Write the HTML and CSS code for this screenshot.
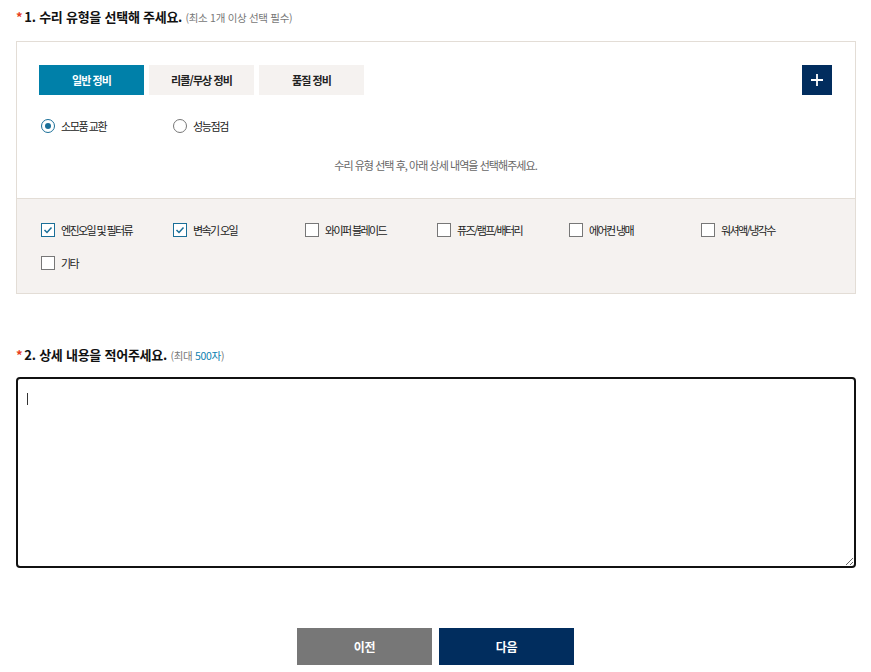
FILE: index.html
```html
<!DOCTYPE html>
<html lang="ko">
<head>
<meta charset="utf-8">
<link rel="stylesheet" href="styles.css">
</head>
<body>
<div class="wrap">
  <h2 class="q-title q1"><span class="star">*</span>1. 수리 유형을 선택해 주세요. <span class="sub">(최소 1개 이상 선택 필수)</span></h2>
  <div class="box">
    <div class="box-top">
      <div class="tab-row">
        <div class="tabs">
          <div class="tab active">일반 정비</div>
          <div class="tab">리콜/무상 정비</div>
          <div class="tab">품질 정비</div>
        </div>
        <div class="plus"><svg width="14" height="14" viewBox="0 0 14 14"><path d="M7 1v12M1 7h12" stroke="#fff" stroke-width="1.8"/></svg></div>
      </div>
      <div class="radio-row">
        <div class="opt"><span class="radio on"></span><span class="lbl">소모품 교환</span></div>
        <div class="opt"><span class="radio"></span><span class="lbl">성능점검</span></div>
      </div>
      <p class="hint">수리 유형 선택 후, 아래 상세 내역을 선택해주세요.</p>
    </div>
    <div class="box-bottom">
      <div class="check-row">
        <div class="opt"><span class="chk on"><svg width="10" height="8" viewBox="0 0 10 8"><path d="M1.5 4l2.5 2.5L8.5 1.5" fill="none" stroke="#1a6f98" stroke-width="1.5"/></svg></span><span class="lbl">엔진오일 및 필터류</span></div>
        <div class="opt"><span class="chk on"><svg width="10" height="8" viewBox="0 0 10 8"><path d="M1.5 4l2.5 2.5L8.5 1.5" fill="none" stroke="#1a6f98" stroke-width="1.5"/></svg></span><span class="lbl">변속기 오일</span></div>
        <div class="opt"><span class="chk"></span><span class="lbl">와이퍼 블레이드</span></div>
        <div class="opt"><span class="chk"></span><span class="lbl">퓨즈/램프/배터리</span></div>
        <div class="opt"><span class="chk"></span><span class="lbl">에어컨 냉매</span></div>
        <div class="opt"><span class="chk"></span><span class="lbl">워셔액/냉각수</span></div>
      </div>
      <div class="check-row">
        <div class="opt"><span class="chk"></span><span class="lbl">기타</span></div>
      </div>
    </div>
  </div>

  <h2 class="q-title q2"><span class="star">*</span>2. 상세 내용을 적어주세요. <span class="sub">(최대 <span class="blue">500자</span>)</span></h2>
  <div class="ta-wrap">
    <textarea class="ta"></textarea>
    <span class="caret"></span>
  </div>

  <div class="btns">
    <button class="btn prev">이전</button>
    <button class="btn next">다음</button>
  </div>
</div>
</body>
</html>
```
FILE: styles.css
```css
* { box-sizing: border-box; }
body {
  margin: 0;
  background: #fff;
  font-family: "Noto Sans CJK KR", "Noto Sans", sans-serif;
  color: #111;
}
.wrap {
  width: 840px;
  margin-left: 16px;
}
.q-title {
  margin: 0;
  font-size: 13px;
  font-weight: 700;
  line-height: 20px;
  letter-spacing: -0.25px;
  color: #111;
}
.q1 { margin-top: 7px; margin-bottom: 13px; }
.q2 { margin-top: 51px; margin-bottom: 11px; }
.star { color: #e8401c; margin-right: 2px; }
.sub {
  font-size: 10.5px;
  font-weight: 400;
  color: #777;
  letter-spacing: -0.3px;
}
.blue { color: #0d7fb0; }

.box {
  border: 1px solid #e3ddd6;
}
.box-top {
  padding: 23px 23px 23px 22px;
  border-bottom: 1px solid #e3ddd6;
}
.tab-row {
  display: flex;
  justify-content: space-between;
  align-items: center;
}
.tabs { display: flex; gap: 5px; }
.tab {
  width: 105px;
  height: 30px;
  line-height: 30px;
  text-align: center;
  font-size: 11px;
  font-weight: 700;
  letter-spacing: -0.9px;
  background: #f5f2f0;
  color: #222;
}
.tab.active { background: #0080a9; color: #fff; }
.plus {
  width: 30px;
  height: 30px;
  background: #012d5e;
  display: flex;
  align-items: center;
  justify-content: center;
}
.radio-row, .check-row {
  display: flex;
  margin-left: 2px;
  height: 20px;
  align-items: center;
}
.radio-row { margin-top: 21px; }
.opt {
  width: 132px;
  display: flex;
  align-items: center;
  gap: 6px;
}
.lbl {
  font-size: 11px;
  letter-spacing: -1.6px;
  color: #222;
}
.radio-row .lbl { letter-spacing: -1.4px; }
.radio {
  width: 14px;
  height: 14px;
  border-radius: 50%;
  border: 1px solid #777;
  display: flex;
  align-items: center;
  justify-content: center;
  background: #fff;
}
.radio.on { border-color: #1a6f98; }
.radio.on::after {
  content: "";
  width: 6px;
  height: 6px;
  border-radius: 50%;
  background: #1a6f98;
}
.hint {
  margin: 19px 0 0;
  text-align: center;
  font-size: 11px;
  line-height: 20px;
  letter-spacing: -0.95px;
  color: #666;
}
.box-bottom {
  background: #f5f2f0;
  padding: 21px 22px 20px 22px;
  display: flex;
  flex-direction: column;
  gap: 13px;
}
.chk {
  width: 14px;
  height: 14px;
  border: 1px solid #777;
  background: #fff;
  display: flex;
  align-items: center;
  justify-content: center;
}
.chk.on { border-color: #1a6f98; }

.ta-wrap { position: relative; }
.ta {
  display: block;
  width: 840px;
  height: 191px;
  border: 2px solid #111;
  border-radius: 4px;
  outline: none;
  padding: 10px;
  font-family: inherit;
  font-size: 12px;
  resize: vertical;
  background: #fff;
}
.caret {
  position: absolute;
  left: 11px;
  top: 16px;
  width: 1px;
  height: 12px;
  background: #333;
}
.btns {
  margin-top: 60px;
  margin-left: 281px;
  display: flex;
  gap: 7px;
}
.btn {
  width: 135px;
  height: 37px;
  border: none;
  color: #fff;
  font-family: inherit;
  font-size: 12px;
  font-weight: 700;
  letter-spacing: -0.3px;
}
.prev { background: #777; }
.next { background: #012d5e; }
```
